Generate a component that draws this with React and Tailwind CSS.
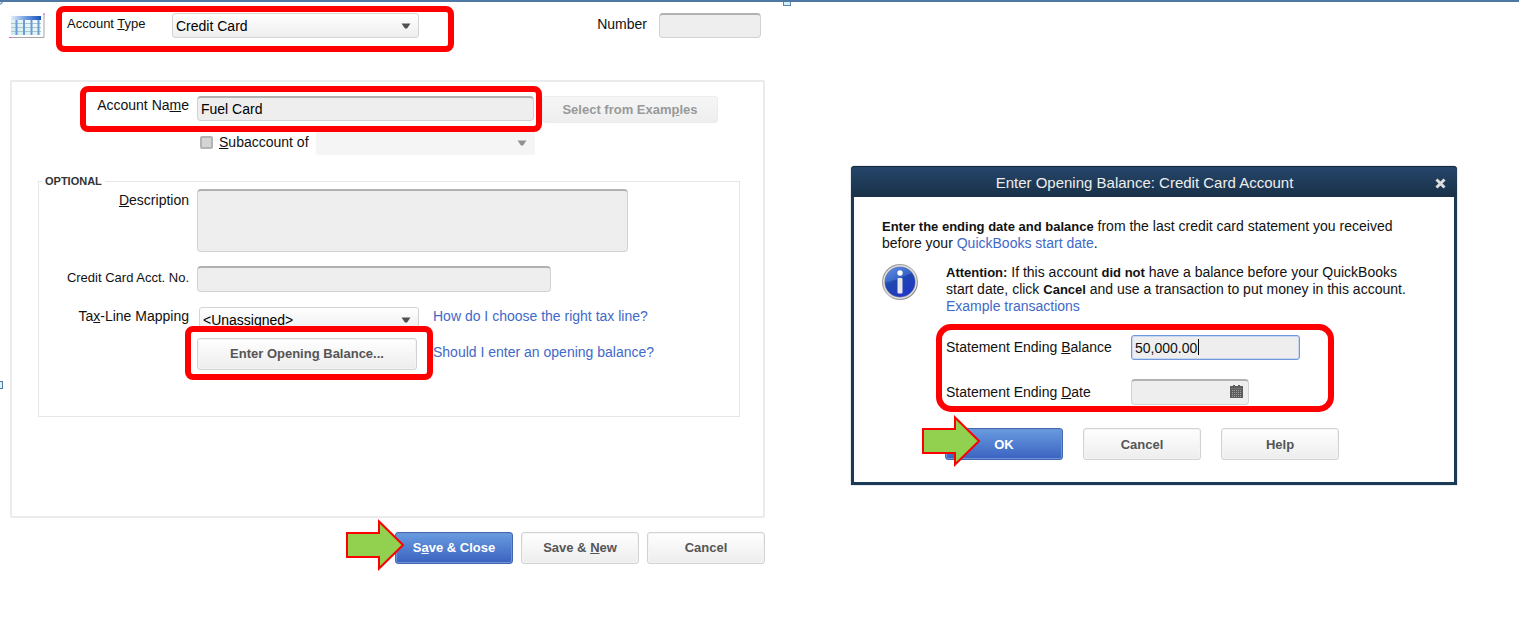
import { useState } from "react";
import clsx from "clsx";

const inputClass =
  "block rounded-[4px] border border-[#d2d2d2] border-t-2 border-t-[#b0b2b1] bg-[#eeeeee] px-[3px] text-sm text-black outline-none";

function Highlight({ className }) {
  return (
    <span
      aria-hidden="true"
      className={clsx(
        "pointer-events-none absolute z-10 border-6 border-[#ff0000]",
        className
      )}
    />
  );
}

function Arrow({ className }) {
  return (
    <svg
      aria-hidden="true"
      viewBox="0 0 60 54"
      className={clsx("pointer-events-none absolute z-10 h-[54px] w-[60px]", className)}
    >
      <path
        d="M2 15H34V3.500L58 27L34 50.500V39H2Z"
        fill="#92d050"
        stroke="#ff0000"
        strokeWidth="2"
      />
    </svg>
  );
}

function Button({ primary, className, children, ...rest }) {
  return (
    <button
      type="button"
      className={clsx(
        "h-8 rounded-[3px] border text-center text-[13px] font-bold",
        primary
          ? "border-[#4268ae] bg-linear-to-b from-[#6a9be0] to-[#3b62c0] text-white inset-ring inset-ring-[#6a93da]"
          : "border-[#d2d2d2] bg-linear-to-b from-white to-[#ededed] text-[#555555] inset-ring inset-ring-[#f4f4f4]",
        className
      )}
      {...rest}
    >
      {children}
    </button>
  );
}

function Select({ id, options, disabled, className, ...rest }) {
  return (
    <div className={clsx("relative h-[25px]", className)}>
      <select
        id={id}
        disabled={disabled}
        className={clsx(
          "block h-full w-full appearance-none rounded-[3px] px-[3px] text-sm text-black outline-none",
          disabled
            ? "bg-[#f5f5f5]"
            : "border border-[#d4d4d4] bg-linear-to-b from-white to-[#eeeeee]"
        )}
        {...rest}
      >
        {options.map((o) => (
          <option key={o}>{o}</option>
        ))}
      </select>
      <svg
        aria-hidden="true"
        viewBox="0 0 10 6"
        className={clsx(
          "pointer-events-none absolute top-[10px] right-2 h-[6px] w-[10px]",
          disabled ? "text-[#929292]" : "text-[#505050]"
        )}
      >
        <path d="M0.500 0.500H9.500L6 5.500H4Z" fill="currentColor" />
      </svg>
    </div>
  );
}

function ChartIcon() {
  return (
    <svg aria-hidden="true" viewBox="0 0 37 26" className="h-[26px] w-[37px] shrink-0">
      <defs>
        <linearGradient id="head" x1="0" y1="0" x2="1" y2="0">
          <stop offset="0" stopColor="#e4eefb" />
          <stop offset="0.5" stopColor="#6d9be0" />
          <stop offset="1" stopColor="#1553bb" />
        </linearGradient>
        <linearGradient id="cells" x1="1" y1="0" x2="0" y2="1">
          <stop offset="0" stopColor="#ffffff" />
          <stop offset="1" stopColor="#cbe9f0" />
        </linearGradient>
      </defs>
      <rect x="1" y="0" width="35" height="25" fill="#fdfdfd" />
      <rect x="3" y="3" width="30" height="19" fill="url(#cells)" />
      <path d="M3 10.500H33M3 14.500H33M3 18.500H33" stroke="#a9c9ce" />
      <path d="M8.500 7V22M16 7V22M23.500 7V22M30.500 7V22" stroke="#6d9bcf" strokeWidth="2" />
      <rect x="3" y="3" width="30" height="4" fill="url(#head)" />
      <path d="M2 24.500H36V1" fill="none" stroke="#a5a5a5" />
      <path d="M1 24.500H3M36 0V2" stroke="#ff3cf0" />
    </svg>
  );
}

function InfoIcon() {
  return (
    <svg aria-hidden="true" viewBox="0 0 36 36" className="size-9 shrink-0">
      <defs>
        <linearGradient id="ring" x1="0" y1="0" x2="1" y2="1">
          <stop offset="0" stopColor="#8c8c8c" />
          <stop offset="0.5" stopColor="#b8b8b8" />
          <stop offset="1" stopColor="#7a7a7a" />
        </linearGradient>
        <linearGradient id="ball" x1="0" y1="0" x2="0.600" y2="1">
          <stop offset="0" stopColor="#5a8fe8" />
          <stop offset="0.5" stopColor="#1f46ae" />
          <stop offset="1" stopColor="#2038c8" />
        </linearGradient>
      </defs>
      <circle cx="18" cy="18" r="18" fill="url(#ring)" />
      <circle cx="18" cy="18" r="16.800" fill="#e6e6e6" />
      <circle cx="18" cy="18" r="15.600" fill="#8a8f9c" />
      <circle cx="18" cy="18" r="15" fill="url(#ball)" />
      <path d="M3 18a15 15 0 0 1 27-9C22 12 14 17 3 18Z" fill="#6b9cf0" opacity="0.350" />
      <circle cx="18" cy="9" r="2.700" fill="#ffffff" />
      <rect x="15.500" y="14" width="5" height="15.500" rx="1" fill="#e8e8e8" />
    </svg>
  );
}

function CalendarIcon() {
  return (
    <svg aria-hidden="true" viewBox="0 0 13 13" className="size-[13px]">
      <path d="M0 1H3V0H5V1H8V0H10V1H13V13H0Z" fill="#5c5c5c" />
      <path d="M2 5.500H11M2 7.500H11M2 9.500H11M2 11.500H11" stroke="#a0a0a0" strokeDasharray="1 1" />
      <path d="M1 3.500H12" stroke="#777777" />
    </svg>
  );
}

function AccountForm() {
  const [type, setType] = useState("Credit Card");
  const [name, setName] = useState("Fuel Card");

  return (
    <form className="pt-[11px] pr-[22px] pl-2">
      <div className="flex h-[25px] items-start">
        <ChartIcon />
        <div className="relative ml-[22px] flex">
          <label htmlFor="type" className="w-[105px] text-[13px] leading-[22px]">
            Account <u>T</u>ype
          </label>
          <Select
            id="type"
            className="w-[247px]"
            options={["Credit Card", "Bank", "Income", "Expense"]}
            value={type}
            onChange={(e) => setType(e.target.value)}
          />
          <Highlight className="-top-[7px] -right-[35px] -bottom-[14px] -left-[11px] rounded-lg" />
        </div>
        <label htmlFor="number" className="ml-auto text-sm leading-[22px]">
          Number
        </label>
        <input id="number" className={clsx(inputClass, "mr-1 ml-3 h-[25px] w-[102px]")} />
      </div>

      <div className="mt-[42px] ml-[2px] rounded-[2px] border-2 border-[#ebebeb] pt-[14px] pb-[99px]">
        <div className="flex items-start gap-2">
          <div className="relative flex gap-2">
            <label htmlFor="name" className="w-[177px] text-right text-sm leading-[18px]">
              Account Na<u>m</u>e
            </label>
            <input
              id="name"
              value={name}
              onChange={(e) => setName(e.target.value)}
              className={clsx(inputClass, "h-[25px] w-[337px]")}
            />
            <Highlight className="-top-[10px] -right-2 -bottom-[11px] left-[68px] rounded-lg" />
          </div>
          <button
            type="button"
            disabled
            className="h-[27px] w-[176px] rounded-[3px] border border-[#ececec] bg-linear-to-b from-[#f6f6f6] to-[#eeeeee] text-[13px] font-bold text-[#999999]"
          >
            Select from Exam<u>p</u>les
          </button>
        </div>

        <div className="mt-[7px] flex items-center pl-[188px]">
          <input
            id="sub"
            type="checkbox"
            className="size-[13px] appearance-none rounded-[2px] border-2 border-[#b3b3b3] bg-[#d4d4d4] checked:bg-[#6a9be0]"
          />
          <label htmlFor="sub" className="ml-[6px] w-[97px] text-sm leading-[25px]">
            <u>S</u>ubaccount of
          </label>
          <Select disabled aria-label="Parent account" className="w-[219px]" options={[""]} />
        </div>

        <fieldset className="mt-5 mr-[23px] ml-[26px] border border-[#e6e6e6] pt-[2px] pb-[46px]">
          <legend className="ml-[3px] px-[3px] text-[11px] leading-[12px] font-bold text-[#333333]">
            OPTIONAL
          </legend>
          <div className="flex gap-2">
            <label htmlFor="desc" className="w-[150px] text-right text-sm leading-[22px]">
              <u>D</u>escription
            </label>
            <textarea id="desc" className={clsx(inputClass, "h-[63px] w-[431px] resize-none")} />
          </div>
          <div className="mt-[14px] flex gap-2">
            <label htmlFor="acct" className="w-[150px] text-right text-[13px] leading-6 whitespace-nowrap">
              Credit Card Acct. No.
            </label>
            <input id="acct" className={clsx(inputClass, "h-[26px] w-[354px]")} />
          </div>
          <div className="mt-[15px] flex items-start gap-2">
            <label htmlFor="tax" className="w-[150px] text-right text-sm leading-[18px]">
              Ta<u>x</u>-Line Mapping
            </label>
            <Select id="tax" className="ml-[2px] w-[220px]" options={["<Unassigned>"]} />
            <a href="#tax-line" className="ml-[6px] text-sm leading-[18px] text-[#4169c8]">
              How do I choose the right tax line?
            </a>
          </div>
          <div className="mt-[6px] flex items-start gap-[14px] pl-[158px]">
            <div className="relative">
              <Button className="w-[220px]">
                Enter Openin<u>g</u> Balance...
              </Button>
              <Highlight className="-top-3 -right-4 -bottom-[10px] -left-3 rounded-lg" />
            </div>
            <a href="#opening" className="ml-[2px] text-sm leading-[28px] text-[#4169c8]">
              Should I enter an opening balance?
            </a>
          </div>
        </fieldset>
      </div>

      <div className="mt-[14px] flex justify-end gap-2">
        <div className="relative">
          <Button primary className="w-[118px]">
            S<u>a</u>ve &amp; Close
          </Button>
          <Arrow className="-top-[14px] -left-[50px]" />
        </div>
        <Button className="w-[118px]">
          Save &amp; <u>N</u>ew
        </Button>
        <Button className="w-[118px]">Cancel</Button>
      </div>
    </form>
  );
}

function OpeningBalanceDialog() {
  const [balance, setBalance] = useState("50,000.00");

  return (
    <section
      role="dialog"
      aria-labelledby="dialog-title"
      className="mt-[164px] mr-[62px] ml-16 self-start rounded-t-[4px] border-3 border-t-0 border-[#1b3a57] bg-white shadow-[0_0_1px_#1b3a57]"
    >
      <header className="-mx-[3px] flex h-[31px] items-center rounded-t-[4px] border-t border-[#16293b] bg-linear-to-b from-[#24456a] to-[#1a3148] pt-[2px] pr-[10px] pl-1 text-[#eeeeee]">
        <h2 id="dialog-title" className="flex-1 text-center text-[15px]">
          Enter Opening Balance: Credit Card Account
        </h2>
        <button type="button" aria-label="Close" className="p-[1px]">
          <svg viewBox="0 0 11 11" className="size-[11px]">
            <path d="M1.500 1.500L9.500 9.500M9.500 1.500L1.500 9.500" stroke="#dddddd" strokeWidth="3" />
          </svg>
        </button>
      </header>

      <div className="pt-[21px] pb-[22px] pl-7 text-sm leading-[17px]">
        <p>
          <b className="text-[13px]">Enter the ending date and balance</b> from the last credit card
          statement you received
          <br />
          before your{" "}
          <a href="#start-date" className="text-[#4169c8]">
            QuickBooks start date
          </a>
          .
        </p>
        <div className="mt-3 flex items-start gap-7">
          <InfoIcon />
          <p>
            <b className="text-[13px]">Attention:</b> If this account{" "}
            <b className="text-[13px]">did not</b> have a balance before your QuickBooks
            <br />
            start date, click <b className="text-[13px]">Cancel</b> and use a transaction to put
            money in this account.
            <br />
            <a href="#examples" className="text-[#4169c8]">
              Example transactions
            </a>
          </p>
        </div>

        <div className="relative mt-5 mr-[122px] ml-16">
          <div className="flex items-center">
            <label htmlFor="balance" className="w-[185px]">
              Statement Ending <u>B</u>alance
            </label>
            <div className="relative">
              <input
                id="balance"
                value={balance}
                onChange={(e) => setBalance(e.target.value)}
                className="block h-[25px] w-[169px] rounded-[3px] border border-[#6f98da] bg-[#eeeeee] px-[3px] text-sm inset-ring inset-ring-[#c9d8f0] outline-none"
              />
              <span className="absolute top-1 left-[67px] h-4 w-px bg-black" />
            </div>
          </div>
          <div className="mt-[19px] flex items-center">
            <label htmlFor="date" className="w-[185px]">
              Statement Ending <u>D</u>ate
            </label>
            <div className="relative">
              <input id="date" className={clsx(inputClass, "h-[26px] w-[118px]")} />
              <button type="button" aria-label="Pick a date" className="absolute top-[6px] right-[6px]">
                <CalendarIcon />
              </button>
            </div>
          </div>
          <Highlight className="-top-[11px] right-[-2px] -bottom-[7px] -left-[10px] rounded-[15px]" />
        </div>

        <div className="mt-[23px] ml-[63px] flex gap-5">
          <div className="relative">
            <Button primary className="w-[118px]">
              OK
            </Button>
            <Arrow className="-top-[14px] -left-[24px]" />
          </div>
          <Button className="w-[118px]">Cancel</Button>
          <Button className="w-[118px]">Help</Button>
        </div>
      </div>
    </section>
  );
}

export default function App() {
  return (
    <main className="relative grid min-h-screen grid-cols-[787fr_732fr] overflow-hidden border-t-2 border-[#4f77a3] bg-white font-['Liberation_Sans',Arial,sans-serif] text-[#111111]">
      <AccountForm />
      <OpeningBalanceDialog />

      {/* selection handles */}
      <span className="absolute -top-[5px] -left-[5px] size-2 rounded-full border border-[#4f77a3] bg-[#d9f3f7]" />
      <span className="absolute -top-[4px] left-[783px] size-2 border border-[#5f86ad] bg-[#d4f1f7]" />
      <span className="absolute top-[379px] -left-[5px] size-2 border border-[#4f77a3] bg-[#d9f3f7]" />
    </main>
  );
}
